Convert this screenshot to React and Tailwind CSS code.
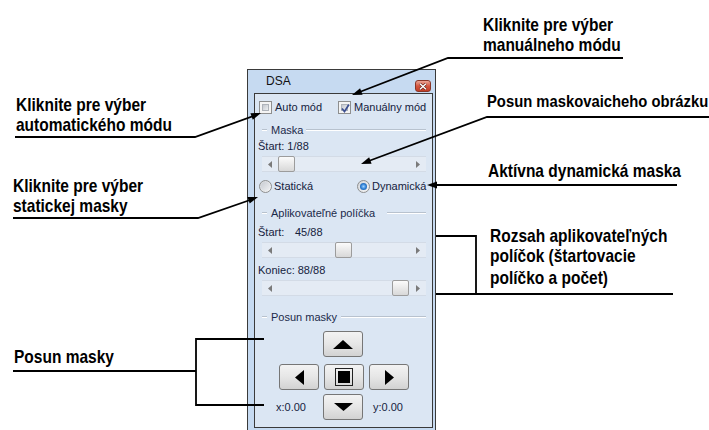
import React from "react";

function head(x1, y1, x2, y2, len = 10, w = 3.5) {
  const dx = x2 - x1, dy = y2 - y1;
  const L = Math.hypot(dx, dy);
  const ux = dx / L, uy = dy / L;
  const bx = x2 - ux * len, by = y2 - uy * len;
  const px = -uy, py = ux;
  return `${x2},${y2} ${bx + px * w},${by + py * w} ${bx - px * w},${by - py * w}`;
}

function Overlay() {
  const s = { stroke: "#000", strokeWidth: 1.8, fill: "none" };
  return (
    <svg className="absolute left-0 top-0 pointer-events-none" width="709" height="430" viewBox="0 0 709 430">
      <polyline points="623,58 448,58 357,93" {...s} />
      <polygon points={head(448, 58, 352, 95)} fill="#000" />
      <polyline points="709,117 487,117 366,162" {...s} />
      <polygon points={head(487, 117, 361, 164)} fill="#000" />
      <polyline points="677,185 432,185" {...s} />
      <polygon points={head(677, 185, 427, 185)} fill="#000" />
      <polyline points="436,236 476,236 476,294" {...s} />
      <polyline points="436,294 673,294" {...s} />
      <polyline points="15,137 195,137 256,115" {...s} />
      <polygon points={head(195, 137, 261, 113)} fill="#000" />
      <polyline points="13,218 198,218 253,199" {...s} />
      <polygon points={head(198, 218, 258, 197)} fill="#000" />
      <polyline points="13,371 196,371" {...s} />
      <polyline points="264,339 196,339 196,405 264,405" {...s} />
    </svg>
  );
}

const LBL = "absolute font-['Liberation_Sans',Arial,sans-serif] font-bold text-black whitespace-nowrap origin-top-left scale-y-[1.14]";

function Checkbox({ checked }) {
  return (
    <div className="w-[13px] h-[13px] border border-[#8e8f8f] bg-[#f4f4f4] p-[2px] shrink-0">
      <div className="relative w-full h-full border border-[#aeb3ba] bg-linear-to-br from-[#c4c8cf] to-[#eef0f2]">
        {checked && (
          <svg className="absolute -left-[2px] -top-[2px]" width="11" height="11" viewBox="0 0 11 11">
            <path d="M2 5.5 L4.5 8.5 L9 1.5" stroke="#3b4f91" strokeWidth="1.7" fill="none" />
          </svg>
        )}
      </div>
    </div>
  );
}

function Radio({ checked }) {
  return (
    <div className="w-[13px] h-[13px] rounded-full border border-[#8e8f8f] bg-linear-to-br from-[#d2d5da] to-[#f6f6f6] flex items-center justify-center shrink-0">
      {checked ? (
        <div className="w-[7px] h-[7px] rounded-full bg-radial from-[#9fd3ff] via-[#2c7fd4] to-[#1a4f96]" />
      ) : (
        <div className="w-[9px] h-[9px] rounded-full bg-linear-to-br from-[#c8ccd2] to-[#f0f1f3]" />
      )}
    </div>
  );
}

function Group({ label, gap }) {
  return (
    <div className="h-full flex items-center pl-[7px] pr-[6px]">
      <div className="w-[5px] h-[2px] border-t border-[#b8c2ce] border-b border-b-white" />
      <span className="ml-[4px] text-[#1b2a4a]">{label}</span>
      <div className={`flex-1 h-[2px] border-t border-[#b8c2ce] border-b border-b-white ${gap}`} />
    </div>
  );
}

function Scroll({ pos }) {
  return (
    <div className="ml-[7px] w-[164px] h-[16px] flex bg-[#e4ebf4] border-y border-[#d3dbe6]">
      <div className="w-[16px] flex items-center justify-center">
        <svg width="4" height="7" viewBox="0 0 4 7"><polygon points="4,0 0,3.5 4,7" fill="#7a7a7a" /></svg>
      </div>
      <div className="w-[131px] flex items-center">
        <div className={`${pos} w-[17px] h-[16px] rounded-[2px] border border-[#9c9c9c] bg-linear-to-b from-[#fbfbfb] to-[#d8d8d8]`} />
      </div>
      <div className="w-[17px] flex items-center justify-center">
        <svg width="4" height="7" viewBox="0 0 4 7"><polygon points="0,0 4,3.5 0,7" fill="#7a7a7a" /></svg>
      </div>
    </div>
  );
}

function Btn({ children }) {
  return (
    <div className="w-[40px] h-[26px] rounded-[3px] border border-[#767676] bg-linear-to-b from-[#f3f3f3] via-[#e6e6e6] to-[#d2d2d2] flex items-center justify-center shrink-0">
      {children}
    </div>
  );
}

export default function App() {
  return (
    <div className="relative w-[709px] h-[430px] overflow-hidden bg-white pl-[247px] pt-[69px]">
      <div className="w-[189px] h-[370px] border border-[#3a3a3a] bg-[#c6daf1] pl-[6px] pr-[2px] font-['Liberation_Sans',Arial,sans-serif]">
        <div className="h-[23px] flex justify-between items-start">
          <span className="pl-[12px] pt-[4px] text-[12px] leading-[14px] text-[#111]">DSA</span>
          <div className="mt-[10px] mr-[2px] w-[16px] h-[12px] rounded-[3px] border border-[#8a3628] bg-linear-to-b from-[#eaa495] via-[#d4553f] to-[#c23d26] flex items-center justify-center">
            <svg width="8" height="7" viewBox="0 0 8 7">
              <path d="M1 0.8 L7 6.2 M7 0.8 L1 6.2" stroke="#5a1a10" strokeWidth="2.6" />
              <path d="M1 0.8 L7 6.2 M7 0.8 L1 6.2" stroke="#fff" strokeWidth="1.5" />
            </svg>
          </div>
        </div>
        <div className="h-[335px] border border-[#3a3a3a] bg-[#dbe6f3] flex flex-col text-[11px] leading-[13px] text-[#15223d]">
          <div className="h-[26px] shrink-0 flex items-center pl-[4px]">
            <div className="w-[79px] flex items-center">
              <Checkbox />
              <span className="ml-[3px]">Auto mód</span>
            </div>
            <Checkbox checked />
            <span className="ml-[3px]">Manuálny mód</span>
          </div>
          <div className="h-[20px] shrink-0"><Group label="Maska" gap="ml-[3px]" /></div>
          <div className="h-[12px] shrink-0 flex items-center pl-[3px]">Štart: 1/88</div>
          <div className="mt-[4px] shrink-0"><Scroll pos="ml-0" /></div>
          <div className="h-[28px] shrink-0 flex items-center pl-[4px]">
            <div className="w-[98px] flex items-center">
              <Radio />
              <span className="ml-[2px]">Statická</span>
            </div>
            <Radio checked />
            <span className="ml-[2px]">Dynamická</span>
          </div>
          <div className="h-[26px] shrink-0"><Group label="Aplikovateľné políčka" gap="ml-[12px]" /></div>
          <div className="h-[12px] shrink-0 flex items-center pl-[3px]">
            <span className="w-[37px]">Štart:</span>
            <span>45/88</span>
          </div>
          <div className="mt-[4px] shrink-0"><Scroll pos="ml-[57px]" /></div>
          <div className="h-[22px] pt-[2px] shrink-0 flex items-center pl-[3px]">Koniec: 88/88</div>
          <div className="shrink-0"><Scroll pos="ml-[114px]" /></div>
          <div className="mt-[11px] h-[20px] shrink-0"><Group label="Posun masky" gap="ml-[4px]" /></div>
          <div className="mt-[4px] shrink-0 flex pl-[68px]">
            <Btn>
              <svg width="20" height="9" viewBox="0 0 20 9"><polygon points="10,0 20,9 0,9" fill="#000" /></svg>
            </Btn>
          </div>
          <div className="mt-[7px] shrink-0 flex pl-[24px] gap-[5px]">
            <Btn>
              <svg width="9" height="15" viewBox="0 0 9 15"><polygon points="0,7.5 9,0 9,15" fill="#000" /></svg>
            </Btn>
            <Btn>
              <svg width="18" height="18" viewBox="0 0 18 18">
                <rect x="0.5" y="0.5" width="17" height="17" fill="none" stroke="#222" strokeWidth="1" />
                <rect x="3" y="3" width="12" height="12" fill="#000" />
              </svg>
            </Btn>
            <Btn>
              <svg width="9" height="15" viewBox="0 0 9 15"><polygon points="9,7.5 0,0 0,15" fill="#000" /></svg>
            </Btn>
          </div>
          <div className="mt-[4px] shrink-0 flex items-center pl-[21px]">
            <span className="w-[47px]">x:0.00</span>
            <Btn>
              <svg width="19" height="8" viewBox="0 0 19 8"><polygon points="0,0 19,0 9.5,8" fill="#000" /></svg>
            </Btn>
            <span className="ml-[10px]">y:0.00</span>
          </div>
        </div>
      </div>

      <div className={`${LBL} text-[15.5px] leading-[17.5px] left-[483px] top-[15px]`}>Kliknite pre výber<br />manuálneho módu</div>
      <div className={`${LBL} text-[14.8px] leading-[17.5px] left-[487px] top-[92px]`}>Posun maskovaicheho obrázku</div>
      <div className={`${LBL} text-[15.5px] leading-[17.5px] left-[488px] top-[161px]`}>Aktívna dynamická maska</div>
      <div className={`${LBL} text-[15.5px] leading-[18.4px] left-[490px] top-[226px]`}>Rozsah aplikovateľných<br />políčok (štartovacie<br />políčko a počet)</div>
      <div className={`${LBL} text-[15.5px] leading-[17.5px] left-[16px] top-[95px]`}>Kliknite pre výber<br />automatického módu</div>
      <div className={`${LBL} text-[15.5px] leading-[17.5px] left-[13px] top-[176px]`}>Kliknite pre výber<br />statickej masky</div>
      <div className={`${LBL} text-[15.5px] leading-[17.5px] left-[14px] top-[347px]`}>Posun masky</div>

      <Overlay />
    </div>
  );
}
